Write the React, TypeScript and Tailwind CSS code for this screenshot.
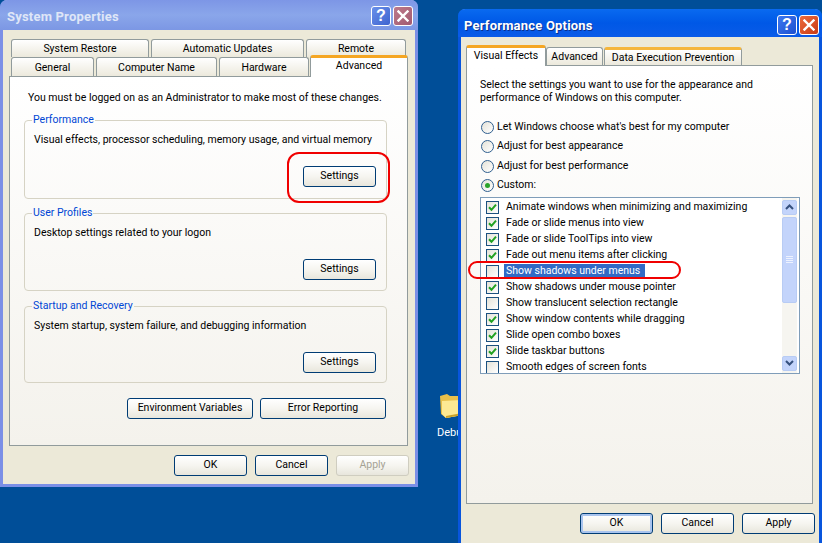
import type { ReactNode } from 'react';

const Btn = ({ children, className = '', disabled = false, focused = false }: { children: ReactNode; className?: string; disabled?: boolean; focused?: boolean }) => (
  <button
    className={`flex h-[21px] items-center justify-center rounded-[3px] border bg-gradient-to-b from-white via-[#f6f5f0] to-[#e8e6dc] text-[10.5px] leading-none ${
      disabled ? 'border-[#cfcdc0] text-[#a5a294]' : 'border-[#003c74] text-black'
    } ${focused ? 'shadow-[inset_0_0_0_2px_#a9c4ee]' : ''} ${className}`}
  >
    {children}
  </button>
);

const Tab = ({ label, className = '' }: { label: string; className?: string }) => (
  <div className={`flex items-center justify-center rounded-t-[3px] border border-b-0 border-[#919b9c] bg-gradient-to-b from-white to-[#ece9dc] pt-[1px] text-[10.5px] leading-none text-black ${className}`}>
    {label}
  </div>
);

const Group = ({ title, text, className = '' }: { title: string; text: string; className?: string }) => (
  <fieldset className={`rounded-[4px] border border-[#d6d3c4] pl-[9px] pr-[10px] ${className}`}>
    <legend className="-ml-[2px] px-[1px] text-[10.5px] leading-[14px] text-[#0046d5]">{title}</legend>
    <p className="mt-[6px] whitespace-nowrap text-[10.5px] leading-[14px] text-black">{text}</p>
    <div className="mt-[19px] flex justify-end">
      <Btn className="w-[73px]">Settings</Btn>
    </div>
  </fieldset>
);

const TitleButtons = ({ active }: { active: boolean }) => (
  <div className="flex gap-[2px]">
    <div className={`flex h-[20px] w-[20px] items-center justify-center rounded-[3px] border border-white bg-gradient-to-br font-['Liberation_Sans'] text-[16px] font-bold leading-none text-white ${active ? 'from-[#3d78f0] to-[#1c4fd0]' : 'from-[#6a90ea] to-[#3f63cf]'}`}>
      ?
    </div>
    <div className={`flex h-[20px] w-[20px] items-center justify-center rounded-[3px] border border-white bg-gradient-to-br ${active ? 'from-[#ec6a3c] to-[#c93a14]' : 'from-[#bd7a8c] to-[#a25a70]'}`}>
      <svg width="12" height="12" viewBox="0 0 12 12">
        <path d="M1.5 1.5l9 9M10.5 1.5l-9 9" stroke="#fff" strokeWidth="2.4" strokeLinecap="square" />
      </svg>
    </div>
  </div>
);

const Check = ({ checked }: { checked: boolean }) => (
  <span className="flex h-[13px] w-[13px] shrink-0 items-center justify-center border border-[#1c5180] bg-gradient-to-br from-[#e4e2d8] to-white">
    {checked && (
      <svg width="9" height="9" viewBox="0 0 9 9">
        <path d="M1 4.2l2.5 2.6L8 1.6" fill="none" stroke="#21a121" strokeWidth="2" />
      </svg>
    )}
  </span>
);

const Radio = ({ label, checked = false }: { label: string; checked?: boolean }) => (
  <div className="flex h-[13px] items-center">
    <span className="flex h-[13px] w-[13px] shrink-0 items-center justify-center rounded-full border border-[#2f5f8f] bg-gradient-to-br from-[#e4e2d8] to-white">
      {checked && <span className="h-[5px] w-[5px] rounded-full bg-[#2aa32a]" />}
    </span>
    <span className="ml-[3px] text-[10.5px] leading-none text-black">{label}</span>
  </div>
);

const effects: [string, boolean][] = [
  ['Animate windows when minimizing and maximizing', true],
  ['Fade or slide menus into view', true],
  ['Fade or slide ToolTips into view', true],
  ['Fade out menu items after clicking', true],
  ['Show shadows under menus', false],
  ['Show shadows under mouse pointer', true],
  ['Show translucent selection rectangle', false],
  ['Show window contents while dragging', true],
  ['Slide open combo boxes', true],
  ['Slide taskbar buttons', true],
  ['Smooth edges of screen fonts', false],
];

const ScrollArrow = ({ up }: { up: boolean }) => (
  <div className="flex h-[15px] w-[15px] items-center justify-center rounded-[2px] border border-[#b8ccf4] bg-[#c3d4fb]">
    <svg width="9" height="6" viewBox="0 0 9 6">
      <path d={up ? 'M1 5l3.5-3.5L8 5' : 'M1 1l3.5 3.5L8 1'} fill="none" stroke="#35507e" strokeWidth="2" />
    </svg>
  </div>
);

const SystemProperties = () => (
  <div className="absolute left-0 top-0 z-10 flex h-[487px] w-[418px] flex-col rounded-t-[7px] border-x-[3px] border-b-[3px] border-[#7b8fe6] bg-[#ece9d8]">
    <div className="-mx-[3px] flex h-[30px] shrink-0 items-center justify-between rounded-t-[7px] bg-gradient-to-b from-[#7d96e6] via-[#8aa6ea] to-[#7c97e4] pl-[7px] pr-[5px] pt-[2px]">
      <span className="pt-[2px] text-[13px] font-bold tracking-[0.2px] text-[#dfe6f7]">System Properties</span>
      <TitleButtons active={false} />
    </div>
    <div className="flex flex-col pl-[6px] pt-[9px]">
      <div className="flex h-[18px] gap-[2px] pl-[2px]">
        <Tab label="System Restore" className="w-[138px]" />
        <Tab label="Automatic Updates" className="w-[153px]" />
        <Tab label="Remote" className="w-[100px]" />
      </div>
      <div className="flex h-[19px] items-end gap-[2px] pl-[2px]">
        <Tab label="General" className="h-[19px] w-[83px] pt-[2px]" />
        <Tab label="Computer Name" className="h-[19px] w-[121px] pt-[2px]" />
        <Tab label="Hardware" className="h-[19px] w-[90px] pt-[2px]" />
        <div className="relative z-10 -mb-px -ml-px flex h-[22px] w-[98px] items-start justify-center rounded-t-[3px] border-x border-[#919b9c] border-t-[3px] border-t-[#f5a623] bg-white pt-[3px] text-[10.5px] leading-none text-black">
          Advanced
        </div>
      </div>
      <div className="flex h-[370px] w-[399px] flex-col border border-[#919b9c] bg-gradient-to-b from-white to-[#f4f2ec] pl-[18px] pr-[20px] pt-[14px]">
        <p className="whitespace-nowrap text-[10.5px] leading-[14px] text-black">You must be logged on as an Administrator to make most of these changes.</p>
        <Group className="mt-[8px] h-[86px] -ml-[4px]" title="Performance" text="Visual effects, processor scheduling, memory usage, and virtual memory" />
        <Group className="mt-[7px] h-[85px] -ml-[4px]" title="User Profiles" text="Desktop settings related to your logon" />
        <Group className="mt-[8px] h-[84px] -ml-[4px]" title="Startup and Recovery" text="System startup, system failure, and debugging information" />
        <div className="mt-[15px] flex justify-end gap-[7px] pr-[1px]">
          <Btn className="w-[126px]">Environment Variables</Btn>
          <Btn className="w-[126px]">Error Reporting</Btn>
        </div>
      </div>
      <div className="mt-[9px] flex w-[400px] justify-end gap-[8px]">
        <Btn className="w-[73px]">OK</Btn>
        <Btn className="w-[73px]">Cancel</Btn>
        <Btn className="w-[73px]" disabled>Apply</Btn>
      </div>
    </div>
  </div>
);

const PerformanceOptions = () => (
  <div className="absolute left-[458px] top-[9px] z-10 flex h-[534px] w-[364px] flex-col rounded-t-[7px] border-x-[3px] border-[#0855dd] bg-[#ece9d8]">
    <div className="-mx-[3px] flex h-[28px] shrink-0 items-center justify-between rounded-t-[7px] bg-gradient-to-b from-[#0a6af0] via-[#0058e6] to-[#0a5be8] pl-[6px] pr-[3px] pt-[3px]">
      <span className="pt-[3px] text-[13px] font-bold tracking-[0.2px] text-white [text-shadow:1px_1px_0_#0a2f8a]">Performance Options</span>
      <TitleButtons active />
    </div>
    <div className="flex flex-1 flex-col pl-[5px] pt-[8px]">
      <div className="flex h-[20px] items-end">
        <div className="relative z-10 -mb-px flex h-[21px] w-[80px] items-start justify-center rounded-t-[3px] border-x border-[#919b9c] border-t-[3px] border-t-[#f5a623] bg-white pt-[3px] text-[10.5px] leading-none text-black">
          Visual Effects
        </div>
        <Tab label="Advanced" className="h-[18px] w-[57px]" />
        <Tab label="Data Execution Prevention" className="ml-[1px] h-[18px] w-[138px] border-t-[3px] border-t-[#f5b63c]" />
      </div>
      <div className="flex h-[439px] w-[347px] flex-col border border-[#919b9c] bg-gradient-to-b from-white to-[#f4f2ec] pl-[13px] pt-[12px]">
        <p className="text-[10.5px] leading-[13px] text-black">
          Select the settings you want to use for the appearance and
          <br />
          performance of Windows on this computer.
        </p>
        <div className="mt-[16.5px] flex flex-col gap-[6.5px] pl-[1px]">
          <Radio label="Let Windows choose what's best for my computer" />
          <Radio label="Adjust for best appearance" />
          <Radio label="Adjust for best performance" />
          <Radio label="Custom:" checked />
        </div>
        <div className="mt-[4.5px] flex h-[177px] w-[320px] border border-[#7f9db9] bg-white pl-[5px]">
          <div className="flex-1 overflow-hidden pt-[2px]">
            {effects.map(([label, checked]) => (
              <div key={label} className="flex h-[16px] items-center">
                <Check checked={checked} />
                <span className={`ml-[5px] flex h-[15px] items-center pl-[2px] pr-[5px] text-[10.5px] leading-none ${label === 'Show shadows under menus' ? 'bg-[#316ac5] text-white' : 'text-black'}`}>
                  {label}
                </span>
              </div>
            ))}
          </div>
          <div className="mr-[2px] flex w-[15px] flex-col bg-[#f6f5f0] py-[2px]">
            <ScrollArrow up />
            <div className="mt-[2px] flex h-[86px] flex-col items-center justify-center gap-[1px] rounded-[2px] border border-[#b8ccf4] bg-[#c3d4fb]">
              <div className="h-px w-[7px] bg-[#edf2fe]" />
              <div className="h-px w-[7px] bg-[#edf2fe]" />
              <div className="h-px w-[7px] bg-[#edf2fe]" />
              <div className="h-px w-[7px] bg-[#edf2fe]" />
            </div>
            <div className="flex-1" />
            <ScrollArrow up={false} />
          </div>
        </div>
      </div>
      <div className="mt-[9px] flex w-[349px] justify-end gap-[8px]">
        <Btn className="w-[73px]" focused>OK</Btn>
        <Btn className="w-[73px]">Cancel</Btn>
        <Btn className="w-[73px]">Apply</Btn>
      </div>
    </div>
  </div>
);

const App = () => (
  <div className="relative h-[543px] w-[822px] overflow-hidden bg-[#004e98] font-['Roboto','Liberation_Sans',sans-serif]">
    <SystemProperties />
    <PerformanceOptions />
    {/* desktop icon, half hidden behind the second window */}
    <div className="absolute left-[437px] top-[393px] flex w-[40px] flex-col items-start">
      <svg width="24" height="26" viewBox="0 0 24 26" className="ml-[2px]">
        <path d="M1 3l7-2 3 2 10 0 0 4 3 15-17 3-5-4z" fill="#e9c04a" />
        <path d="M3 8l20-1v15L7 25l-4-4z" fill="#fde993" />
        <path d="M7 25l16-3v-2L7 23z" fill="#c9a028" />
      </svg>
      <span className="mt-[7px] text-[11px] leading-[14px] text-white">Debug</span>
    </div>
    {/* red annotation marks */}
    <div className="absolute left-[287px] top-[152px] z-20 h-[51px] w-[103px] rounded-[12px] border-2 border-[#f00000]" />
    <div className="absolute left-[468px] top-[261px] z-20 h-[18px] w-[213px] rounded-[9px] border-2 border-[#f00000]" />
  </div>
);

export default App;
